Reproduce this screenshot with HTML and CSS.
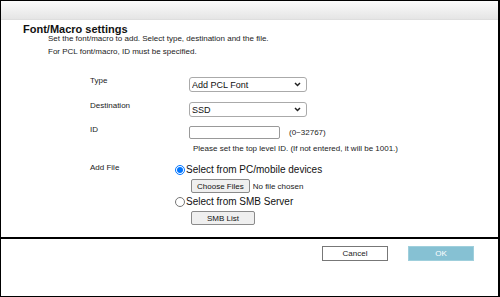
FILE: index.html
```html
<!DOCTYPE html>
<html lang="en">
<head>
    <meta charset="UTF-8">
    <title>Font/Macro settings</title>
    <link rel="stylesheet" href="styles.css">
</head>
<body>
    <div class="frame">
        <div class="topbar"></div>

        <div class="content">
            <h1>Font/Macro settings</h1>
            <p class="desc">Set the font/macro to add. Select type, destination and the file.</p>
            <p class="desc">For PCL font/macro, ID must be specified.</p>

            <div class="form">
                <div class="row">
                    <div class="label">Type</div>
                    <div class="field">
                        <div class="sel-wrap">
                            <select class="sel">
                                <option>Add PCL Font</option>
                            </select>
                            <svg class="chev" width="7" height="5" viewBox="0 0 7 5"><path d="M1 1 L3.5 3.5 L6 1" fill="none" stroke="#222" stroke-width="1.5"/></svg>
                        </div>
                    </div>
                </div>
                <div class="row row-dest">
                    <div class="label">Destination</div>
                    <div class="field">
                        <div class="sel-wrap">
                            <select class="sel">
                                <option>SSD</option>
                            </select>
                            <svg class="chev" width="7" height="5" viewBox="0 0 7 5"><path d="M1 1 L3.5 3.5 L6 1" fill="none" stroke="#222" stroke-width="1.5"/></svg>
                        </div>
                    </div>
                </div>
                <div class="row row-id">
                    <div class="label">ID</div>
                    <div class="field">
                        <div class="id-line">
                            <input type="text" class="id-input">
                            <span class="range">(0~32767)</span>
                        </div>
                        <div class="hint">Please set the top level ID. (If not entered, it will be 1001.)</div>
                    </div>
                </div>
                <div class="row row-file">
                    <div class="label">Add File</div>
                    <div class="field">
                        <label class="radio"><input type="radio" name="src" checked>Select from PC/mobile devices</label>
                        <div class="sub">
                            <button class="btn-file">Choose Files</button><span class="nofile">No file chosen</span>
                        </div>
                        <label class="radio"><input type="radio" name="src">Select from SMB Server</label>
                        <div class="sub">
                            <button class="btn-smb">SMB List</button>
                        </div>
                    </div>
                </div>
            </div>
        </div>

        <div class="footer">
            <button class="btn-cancel">Cancel</button>
            <button class="btn-ok">OK</button>
        </div>
    </div>
</body>
</html>
```

FILE: styles.css
```css
html, body {
    margin: 0;
    padding: 0;
}
body {
    font-family: Arial, "Liberation Sans", sans-serif;
    color: #222;
    background: #fff;
}
.frame {
    width: 500px;
    height: 297px;
    box-sizing: border-box;
    border: 1px solid #000;
    border-right-width: 2px;
    display: flex;
    flex-direction: column;
}
.topbar {
    height: 18px;
    flex-shrink: 0;
    background: linear-gradient(#fbfbfb, #e5e5e5);
    border-bottom: 1px solid #dedede;
}
.content {
    flex: 1;
    padding: 3px 0 0 22px;
}
h1 {
    margin: 0 0 -3px 0;
    font-size: 11px;
    font-weight: bold;
    line-height: 12px;
    color: #111;
}
.desc {
    margin: 0 0 0 25px;
    font-size: 8px;
    line-height: 13px;
    color: #222;
}
.form {
    margin: 19px 0 0 67px;
    font-size: 8px;
}
.row {
    display: flex;
    margin-bottom: 10px;
}
.row-dest {
    margin-bottom: 9px;
}
.label {
    width: 99px;
    margin-top: -1px;
}
.sel-wrap {
    position: relative;
    width: 118px;
    height: 15px;
}
.sel {
    appearance: none;
    -webkit-appearance: none;
    width: 118px;
    height: 15px;
    box-sizing: border-box;
    font-family: Arial, "Liberation Sans", sans-serif;
    font-size: 9px;
    padding: 0 0 0 2px;
    margin: 0;
    border: 1px solid #aaa;
    border-radius: 3px;
    background: #fff;
    color: #111;
}
.chev {
    position: absolute;
    right: 6px;
    top: 5px;
    pointer-events: none;
}
.id-line {
    display: flex;
    align-items: center;
}
.id-input {
    width: 91px;
    height: 13px;
    box-sizing: border-box;
    border: 1px solid #999;
    border-radius: 2px;
    padding: 0;
    margin: 0;
}
.range {
    margin-left: 9px;
    font-size: 8px;
}
.hint {
    margin: 5px 0 0 4px;
    font-size: 8px;
}
.row-id {
    margin-bottom: 10px;
}
.row-file .label {
    margin-top: 0;
}
.field {
    display: flex;
    flex-direction: column;
}
.row-file .field {
    margin-left: -14px;
}
.radio {
    display: flex;
    align-items: center;
    font-size: 10px;
    line-height: 13px;
    color: #111;
}
.radio input {
    margin: 0 1px 0 0;
    width: 10px;
    height: 10px;
}
.sub {
    display: flex;
    align-items: center;
    margin: 3px 0 2px 16px;
}
.btn-file, .btn-smb {
    font-family: Arial, "Liberation Sans", sans-serif;
    font-size: 8px;
    height: 14px;
    padding: 0 5px;
    border: 1px solid #8a8a8a;
    border-radius: 2px;
    background: #efefef;
    color: #111;
}
.btn-smb {
    flex: 0 0 64px;
    width: 64px;
}
.nofile {
    margin-left: 3px;
    font-size: 8px;
}
.footer {
    height: 60px;
    flex-shrink: 0;
    border-top: 2px solid #000;
    display: flex;
    justify-content: flex-end;
    align-items: flex-start;
    gap: 20px;
    padding: 7px 24px 0 0;
    box-sizing: border-box;
}
.footer button {
    width: 66px;
    height: 15px;
    font-family: Arial, "Liberation Sans", sans-serif;
    font-size: 8px;
    padding: 0;
}
.btn-cancel {
    background: #fff;
    border: 1px solid #777;
    color: #222;
}
.btn-ok {
    background: #86c1d3;
    border: 1px solid #9fcfdc;
    color: #fff;
}
```
